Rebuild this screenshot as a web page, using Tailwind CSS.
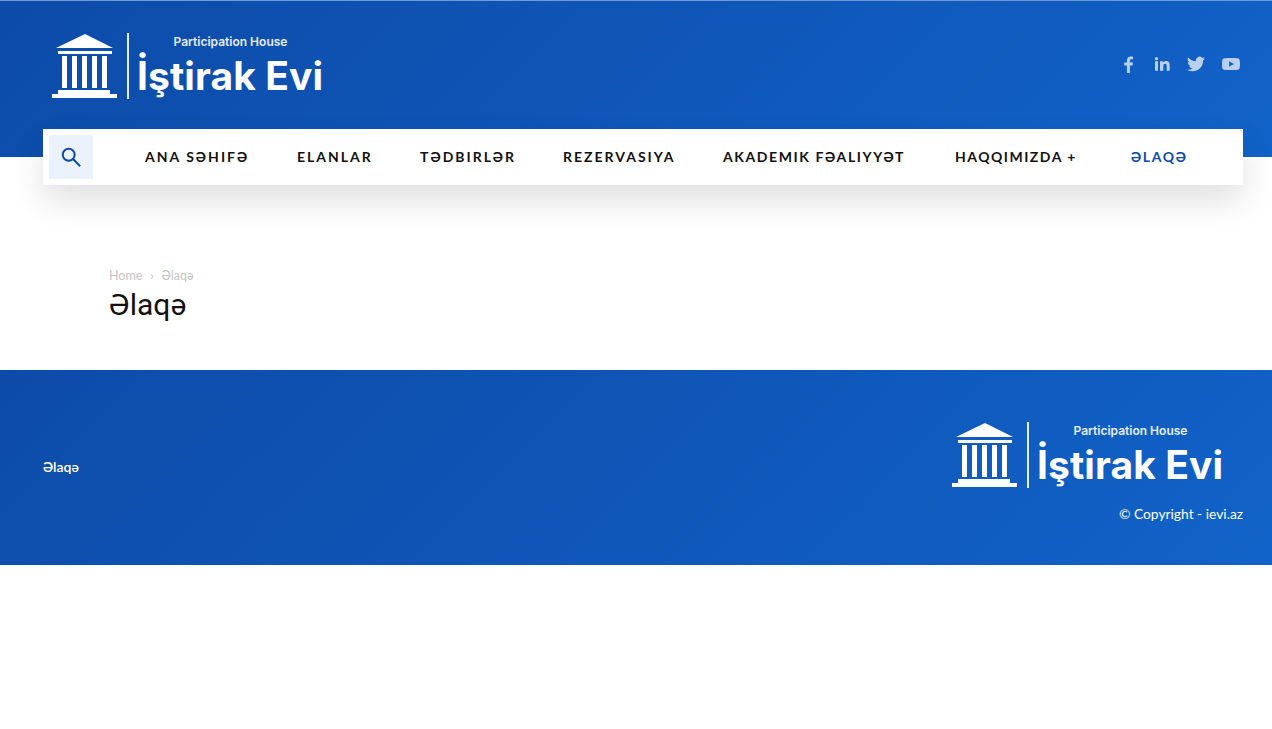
<!DOCTYPE html>
<html lang="en">
  <head>
    <meta charset="UTF-8" />
    <meta name="viewport" content="width=device-width, initial-scale=1.0" />
    <title>Əlaqə</title>
    <script src="https://cdn.jsdelivr.net/npm/@tailwindcss/browser@4"></script>
  </head>
  <body class="bg-white font-['Lato','Noto_Sans',sans-serif] min-h-[729px]">

    <!-- header -->
    <header class="h-[157px] border-t border-[#6f9ad8] bg-linear-[135deg] from-[#0d4ba8] to-[#1162c8] pl-[43px] pr-[29px]">
      <div class="h-[128px] flex items-center justify-between">
        <div class="flex items-center ml-[9px] mt-[2px] text-white">
          <svg class="w-[66px] h-[66px]" viewBox="0 0 66 66" fill="#fff">
            <path d="M33 1 L61 15 H4 Z"/>
            <rect x="6" y="18" width="54" height="3"/>
            <rect x="10" y="23" width="5" height="32"/>
            <rect x="20" y="23" width="5" height="32"/>
            <rect x="30" y="23" width="5" height="32"/>
            <rect x="40" y="23" width="5" height="32"/>
            <rect x="50" y="23" width="5" height="32"/>
            <rect x="6" y="57" width="52" height="4"/>
            <rect x="0" y="61" width="65" height="4"/>
          </svg>
          <div class="ml-[9px] h-[66px] w-[2px] bg-white/90"></div>
          <div class="ml-[8px] w-[187px] font-['Inter',sans-serif]">
            <div class="text-[12px] leading-[14px] font-semibold text-white/90 text-center mb-[5px] whitespace-nowrap">Participation House</div>
            <div class="text-[39px] leading-[44px] font-bold tracking-[0.1px] whitespace-nowrap">İştirak Evi</div>
          </div>
        </div>
        <div class="flex items-center gap-[17px] mr-[3px] mb-[2px] text-[#b9d0f0]">
          <svg class="w-[17px] h-[17px]" viewBox="0 0 24 24" fill="currentColor"><path d="M14 24v-10.500h3.700l.6-4.300H14V6.700c0-1.300.4-2.100 2.200-2.100h2.200V.9C18 .8 16.700.700 15.300.700c-3.200 0-5.500 2-5.500 5.600v2.900H6v4.300h3.800V24z"/></svg>
          <svg class="w-[16px] h-[16px]" viewBox="0 0 24 24" fill="currentColor"><path d="M1.500 8h4.500v14H1.500zM3.700 1.500a2.500 2.500 0 1 1 0 5 2.500 2.500 0 0 1 0-5zM9 8h4.300v2c.7-1.200 2.300-2.400 4.600-2.400 4.700 0 5.600 3 5.600 7V22H19v-6.500c0-1.700 0-3.800-2.300-3.800s-2.700 1.800-2.700 3.700V22H9z"/></svg>
          <svg class="w-[18px] h-[18px]" viewBox="0 0 24 24" fill="currentColor"><path d="M24 4.600a10 10 0 0 1-2.800.8 5 5 0 0 0 2.200-2.700 10 10 0 0 1-3.100 1.200 4.900 4.900 0 0 0-8.400 4.500A14 14 0 0 1 1.700 3.200a4.900 4.900 0 0 0 1.500 6.600 4.900 4.900 0 0 1-2.200-.6v.1a4.900 4.900 0 0 0 3.900 4.800 5 5 0 0 1-2.200.1 4.900 4.900 0 0 0 4.600 3.400A9.900 9.900 0 0 1 0 19.600a14 14 0 0 0 7.500 2.200c9.100 0 14-7.500 14-14v-.6A10 10 0 0 0 24 4.600z"/></svg>
          <svg class="w-[18px] h-[18px]" viewBox="0 0 24 24" fill="currentColor"><path d="M23.500 6.500a3 3 0 0 0-2.100-2.100C19.500 3.900 12 3.900 12 3.900s-7.500 0-9.400.5A3 3 0 0 0 .5 6.500C0 8.400 0 12 0 12s0 3.600.5 5.500a3 3 0 0 0 2.100 2.100c1.900.5 9.400.5 9.400.5s7.500 0 9.400-.5a3 3 0 0 0 2.100-2.100c.5-1.900.5-5.500.5-5.500s0-3.600-.5-5.500zM9.600 15.600V8.400l6.200 3.600z"/></svg>
        </div>
      </div>

      <!-- nav bar -->
      <nav class="relative h-14 bg-white flex items-center pl-[6px] shadow-[0_16px_32px_rgba(0,0,0,0.12)]">
        <div class="w-11 h-11 bg-[#ebf2fb] flex items-center justify-center text-[#0d4ba8]">
          <svg class="w-[22px] h-[22px]" viewBox="0 0 24 24" fill="none" stroke="currentColor" stroke-width="2.200"><circle cx="9.500" cy="9.500" r="6.500"/><path d="M14.500 14.500 L22 22"/></svg>
        </div>
        <ul class="flex items-center ml-[52px] mb-[2px] text-[14px] font-bold tracking-[2px] text-[#111] whitespace-nowrap">
          <li class="w-[152px]">ANA SƏHIFƏ</li>
          <li class="w-[123px]">ELANLAR</li>
          <li class="w-[143px]">TƏDBIRLƏR</li>
          <li class="w-[160px]">REZERVASIYA</li>
          <li class="w-[232px] tracking-[1.600px]">AKADEMIK FƏALIYYƏT</li>
          <li class="w-[176px] tracking-[1.500px]">HAQQIMIZDA +</li>
          <li class="text-[#0d4ba8] tracking-[1.600px]">ƏLAQƏ</li>
        </ul>
      </nav>
    </header>

    <!-- page title -->
    <main class="h-[213px] pl-[109px] pt-[111px]">
      <div class="flex items-center text-[12.500px] leading-[16px] text-[#c4c4c4]">
        <span>Home</span>
        <span class="mx-[8px]">›</span>
        <span>Əlaqə</span>
      </div>
      <h1 class="mt-[4px] font-['Roboto',sans-serif] text-[30px] leading-[34px] text-[#111]">Əlaqə</h1>
    </main>

    <!-- footer -->
    <footer class="h-[195px] bg-linear-[135deg] from-[#0d4ba8] to-[#1162c8] pl-[43px] pr-[29px] flex items-center justify-between text-white">
      <a class="text-[14px] font-semibold mt-[-3px]">Əlaqə</a>
      <div class="flex flex-col items-end mt-[10px]">
        <div class="flex items-center mr-[19px]">
          <svg class="w-[66px] h-[66px]" viewBox="0 0 66 66" fill="#fff">
            <path d="M33 1 L61 15 H4 Z"/>
            <rect x="6" y="18" width="54" height="3"/>
            <rect x="10" y="23" width="5" height="32"/>
            <rect x="20" y="23" width="5" height="32"/>
            <rect x="30" y="23" width="5" height="32"/>
            <rect x="40" y="23" width="5" height="32"/>
            <rect x="50" y="23" width="5" height="32"/>
            <rect x="6" y="57" width="52" height="4"/>
            <rect x="0" y="61" width="65" height="4"/>
          </svg>
          <div class="ml-[9px] h-[66px] w-[2px] bg-white/90"></div>
          <div class="ml-[8px] w-[187px] font-['Inter',sans-serif]">
            <div class="text-[12px] leading-[14px] font-semibold text-white/90 text-center mb-[5px] whitespace-nowrap">Participation House</div>
            <div class="text-[39px] leading-[44px] font-bold tracking-[0.1px] whitespace-nowrap">İştirak Evi</div>
          </div>
        </div>
        <p class="mt-[17px] text-[13.800px] leading-[18px]">© Copyright - ievi.az</p>
      </div>
    </footer>

  </body>
</html>
